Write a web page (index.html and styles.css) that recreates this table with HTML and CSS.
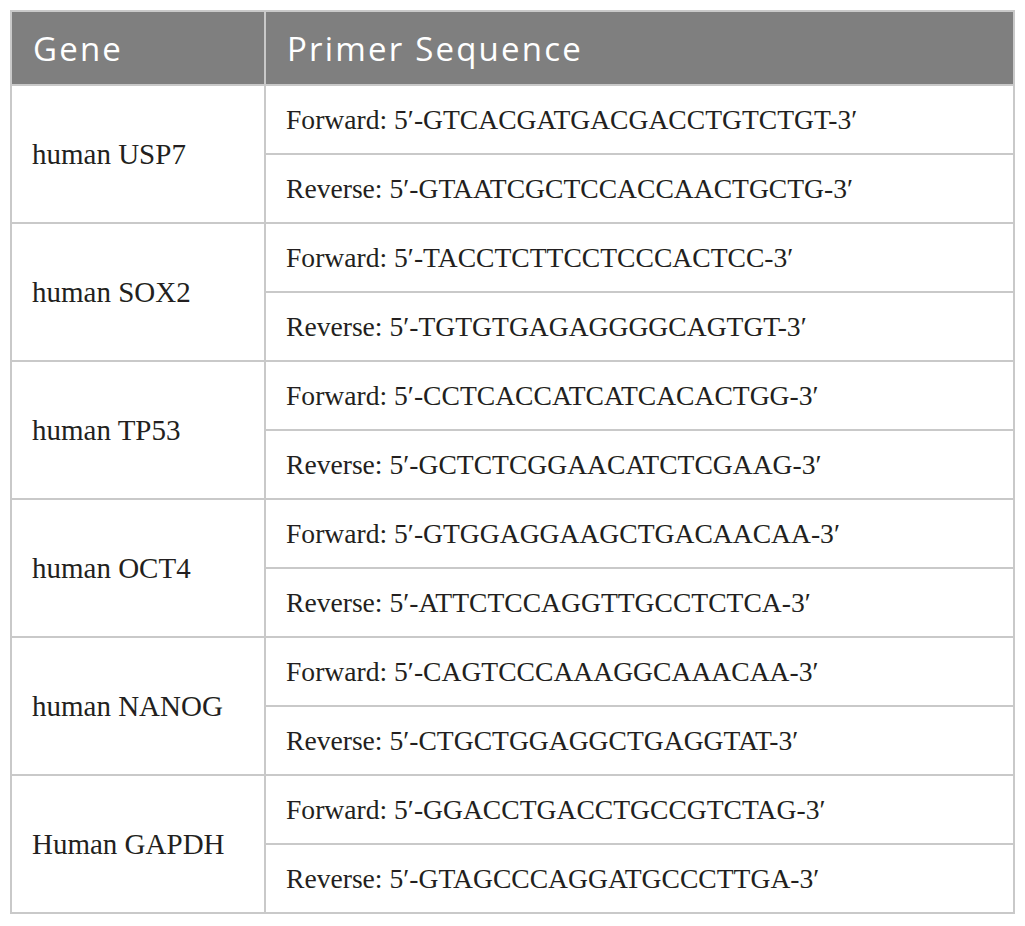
FILE: index.html
```html
<!DOCTYPE html>
<html>
<head>
<meta charset="utf-8">
<link rel="stylesheet" href="styles.css">
</head>
<body>
<table class="primers">
  <thead>
    <tr class="head-row">
      <th class="col-gene">Gene</th>
      <th class="col-seq">Primer Sequence</th>
    </tr>
  </thead>
  <tbody>
    <tr><td class="gene" rowspan="2">human USP7</td><td class="seq">Forward: 5′-GTCACGATGACGACCTGTCTGT-3′</td></tr>
    <tr><td class="seq">Reverse: 5′-GTAATCGCTCCACCAACTGCTG-3′</td></tr>
    <tr><td class="gene" rowspan="2">human SOX2</td><td class="seq">Forward: 5′-TACCTCTTCCTCCCACTCC-3′</td></tr>
    <tr><td class="seq">Reverse: 5′-TGTGTGAGAGGGGCAGTGT-3′</td></tr>
    <tr><td class="gene" rowspan="2">human TP53</td><td class="seq">Forward: 5′-CCTCACCATCATCACACTGG-3′</td></tr>
    <tr><td class="seq">Reverse: 5′-GCTCTCGGAACATCTCGAAG-3′</td></tr>
    <tr><td class="gene" rowspan="2">human OCT4</td><td class="seq">Forward: 5′-GTGGAGGAAGCTGACAACAA-3′</td></tr>
    <tr><td class="seq">Reverse: 5′-ATTCTCCAGGTTGCCTCTCA-3′</td></tr>
    <tr><td class="gene" rowspan="2">human NANOG</td><td class="seq">Forward: 5′-CAGTCCCAAAGGCAAACAA-3′</td></tr>
    <tr><td class="seq">Reverse: 5′-CTGCTGGAGGCTGAGGTAT-3′</td></tr>
    <tr><td class="gene" rowspan="2">Human GAPDH</td><td class="seq">Forward: 5′-GGACCTGACCTGCCGTCTAG-3′</td></tr>
    <tr><td class="seq">Reverse: 5′-GTAGCCCAGGATGCCCTTGA-3′</td></tr>
  </tbody>
</table>
</body>
</html>
```

FILE: styles.css
```css
html, body {
  margin: 0;
  padding: 0;
  background: #ffffff;
}

body {
  padding: 10px 10px 0 10px;
}

.primers {
  border-collapse: collapse;
  width: 1005px;
  table-layout: fixed;
  font-family: "Liberation Serif", "Times New Roman", serif;
  color: #231f20;
}

.primers th,
.primers td {
  border: 2px solid #c9c9c9;
  text-align: left;
  vertical-align: middle;
  padding: 0 0 0 20px;
}

.head-row th {
  background: #7f7f7f;
  color: #ffffff;
  font-family: "Open Sans", "Liberation Sans", sans-serif;
  font-weight: 400;
  font-size: 33px;
  letter-spacing: 2.2px;
  height: 72px;
  padding-left: 21px;
}

.col-gene {
  width: 231px;
}

.seq {
  height: 67px;
  font-size: 27.6px;
}

.gene {
  font-size: 29px;
}
```
